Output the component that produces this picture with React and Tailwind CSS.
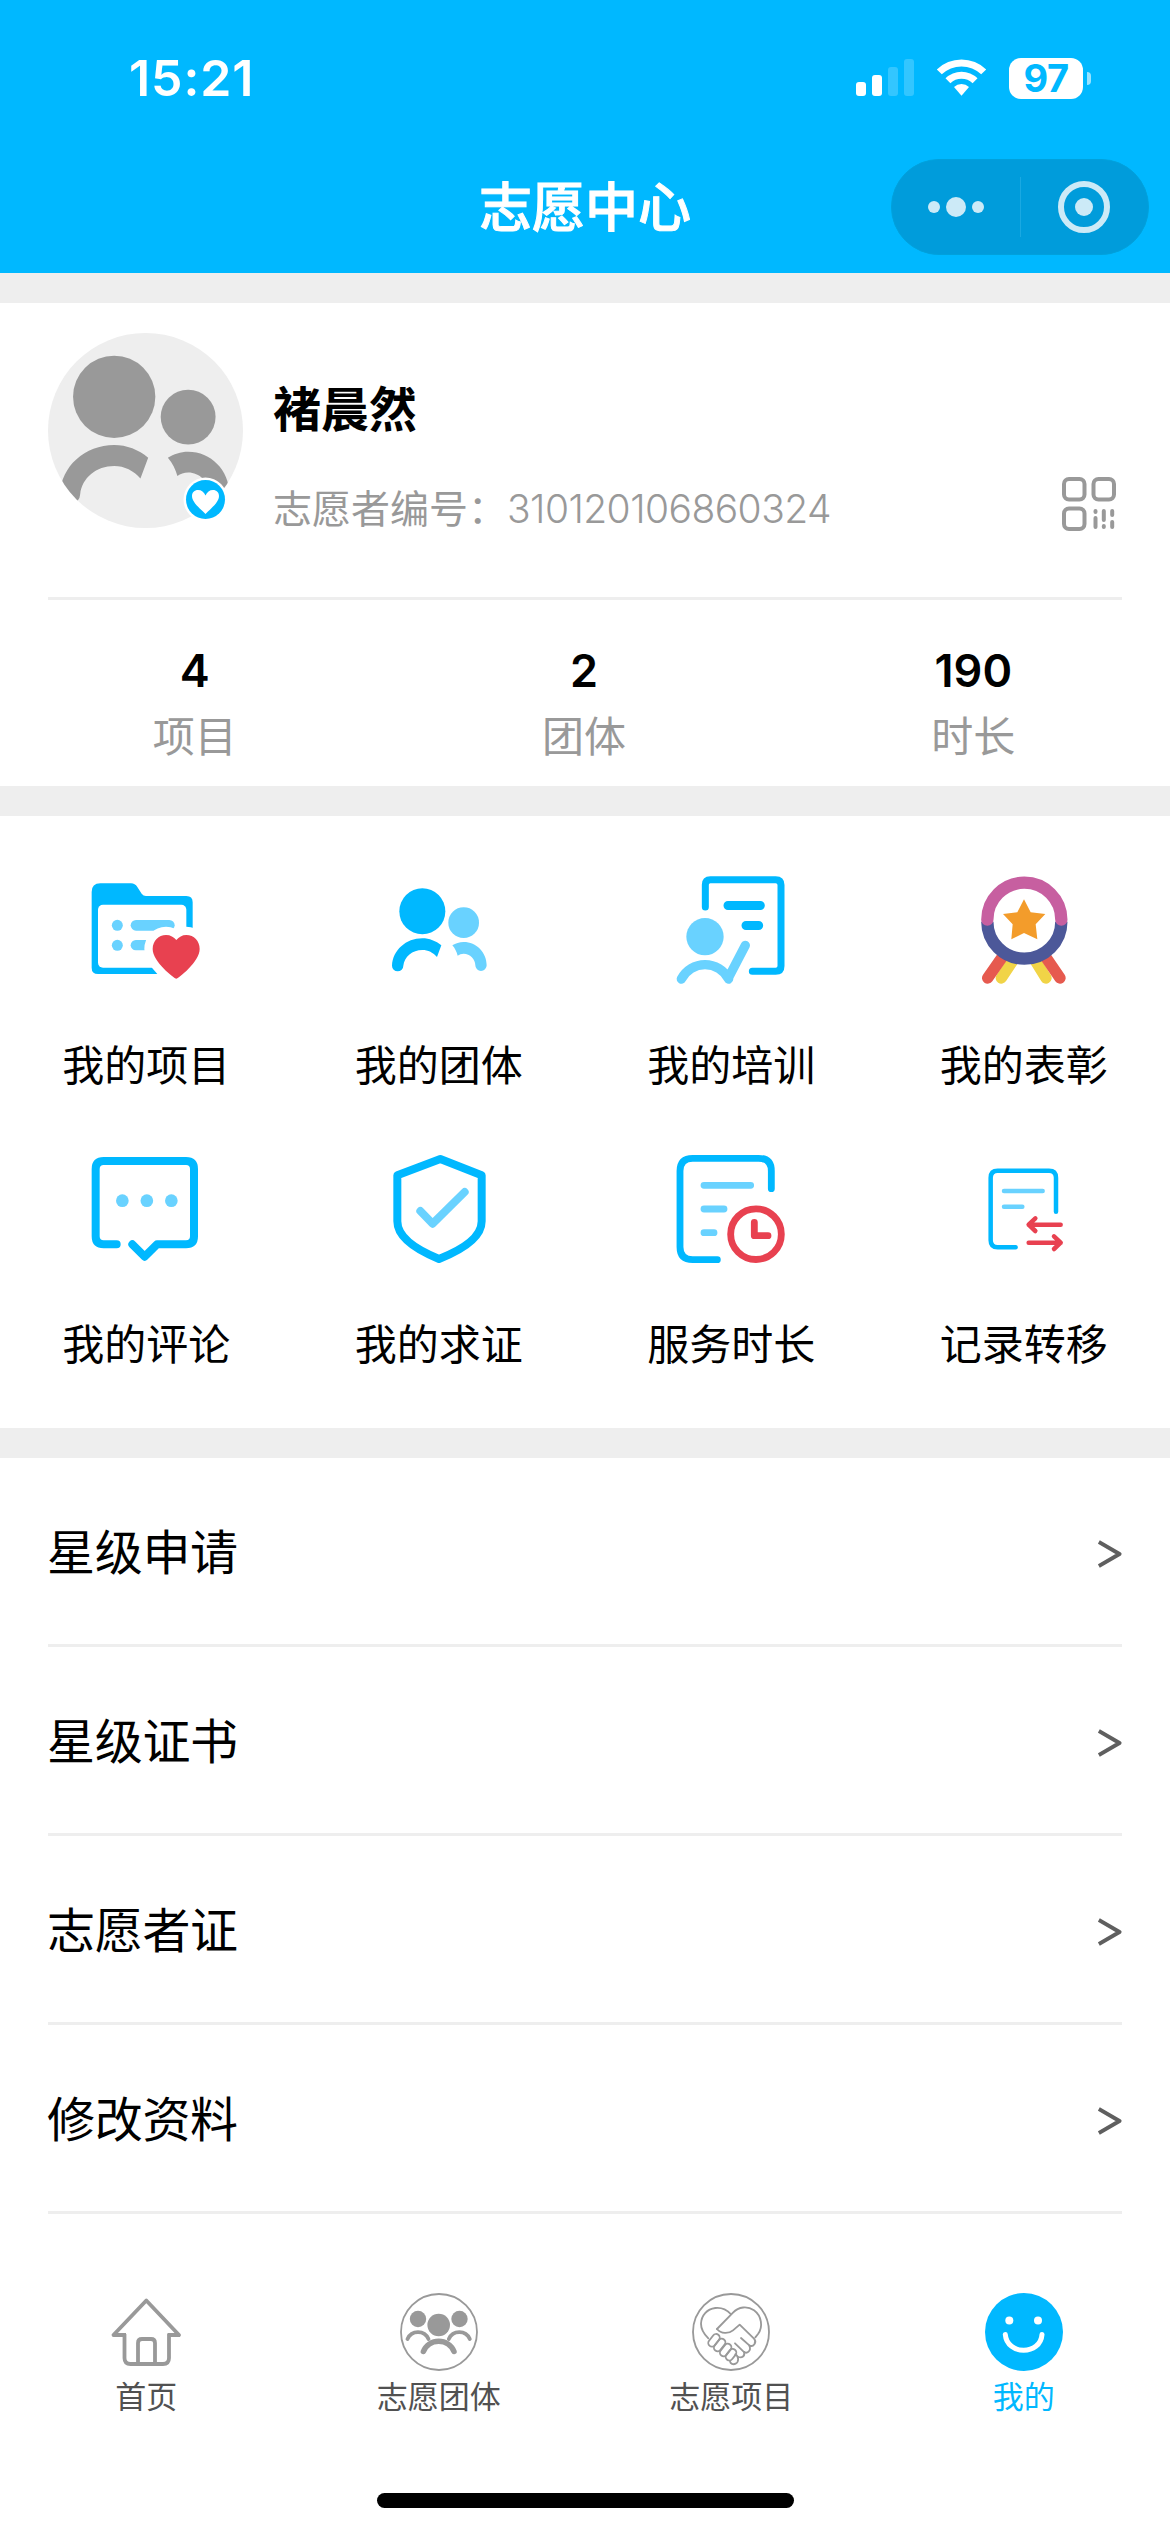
import React from 'react';

const BLUE = '#00b8ff';
const LIGHT = '#69d2ff';
const RED = '#e84150';
const GRAY = '#999999';

function GroupShape({ main, sub }) {
  return (
    <>
      <circle cx="1146" cy="184" r="69" fill={main} />
      <path d="M1055 347 C1057 301 1097 265 1146 265 C1167 265 1187 273 1203 286 L1190 321 C1179 308 1163 300 1146 300 C1116 300 1092 320 1089 347 A17 17 0 0 1 1055 347 Z" fill={main} />
      <circle cx="1270" cy="218" r="46" fill={sub} />
      <path d="M1339 346 C1339 307 1308 276 1270 276 C1257 276 1246 280 1236 286 C1244 295 1249 306 1252 317 C1257 313 1263 311 1270 311 C1289 311 1305 327 1305 346 A17 17 0 0 0 1339 346 Z" fill={sub} />
    </>
  );
}

function StatusBar() {
  return (
    <div className="flex h-[156px] items-center justify-between pl-[129px] pr-[79px]">
      <span className="text-[50px] font-semibold leading-none tracking-[0.9px]">15:21</span>
      <div className="flex items-center">
        <svg className="h-[38px] w-[58px]" viewBox="0 0 58 38" fill="#fff">
          <rect x="0" y="23" width="10" height="14" rx="3" />
          <rect x="16" y="16" width="10" height="21" rx="3" />
          <rect x="32" y="8" width="10" height="29" rx="3" opacity="0.2" />
          <rect x="48" y="0" width="10" height="37" rx="3" opacity="0.2" />
        </svg>
        <svg className="ml-[22px] h-[38px] w-[51px]" viewBox="0 0 51 38" fill="#fff">
          <path d="M0.800 10.400 A35.500 35.500 0 0 1 50.200 10.400 L45.200 15.300 A28.500 28.500 0 0 0 5.800 15.300 Z" />
          <path d="M9.500 19.300 A23 23 0 0 1 41.500 19.300 L36.600 24.200 A16 16 0 0 0 14.400 24.200 Z" />
          <path d="M18 28 A11 11 0 0 1 33 28 L25.500 36.800 Z" strokeLinejoin="round" />
        </svg>
        <div className="ml-[22px] flex h-[41px] w-[74px] items-center justify-center rounded-[12px] bg-white text-[38px] font-bold leading-none tracking-[-0.5px] text-[#00b8ff]">
          97
        </div>
        <div className="ml-[4px] h-[13px] w-[4px] rounded-r-full bg-white/60" />
      </div>
    </div>
  );
}

function Header() {
  return (
    <header className="h-[273px] bg-[#00b8ff] text-white">
      <StatusBar />
      <div className="grid h-[102px] grid-cols-[1fr_auto_1fr] items-center pr-[21px]">
        <span />
        <h1 className="ml-[21px] pt-[2px] text-[53px] font-medium leading-none [-webkit-text-stroke:1px_#fff]">志愿中心</h1>
        <div className="flex h-[96px] w-[258px] items-center justify-self-end rounded-full border border-[#00a1dc] bg-[#009cdb]">
          <div className="flex flex-1 items-center justify-center gap-[6px]">
            <span className="h-3 w-3 rounded-full bg-[#cceaf7]" />
            <span className="h-5 w-5 rounded-full bg-[#cceaf7]" />
            <span className="h-3 w-3 rounded-full bg-[#cceaf7]" />
          </div>
          <div className="h-[60px] w-px bg-[#1aa9e2]" />
          <div className="flex flex-1 items-center justify-center">
            <div className="flex h-[52px] w-[52px] items-center justify-center rounded-full border-6 border-[#cceaf7]">
              <span className="h-[18px] w-[18px] rounded-full bg-[#cceaf7]" />
            </div>
          </div>
        </div>
      </div>
    </header>
  );
}

function Avatar() {
  return (
    <div className="relative h-[195px] w-[195px]">
      <svg className="h-full w-full rounded-full bg-[#eeeeee]" viewBox="1035 77 327 327">
        <GroupShape main={GRAY} sub={GRAY} />
      </svg>
      <svg className="absolute bottom-[6px] right-[15px] h-[45px] w-[45px]" viewBox="0 0 45 45">
        <circle cx="22.5" cy="22.5" r="22" fill="#fff" />
        <circle cx="22.5" cy="22.5" r="19.5" fill={BLUE} />
        <path d="M22.500 37 C19 33 9 26 9 19 C9 15.500 11.500 13 15 13 C18.500 13 21 15 22.500 18.500 C24 15 26.500 13 30 13 C33.500 13 36 15.500 36 19 C36 26 26 33 22.500 37 Z" fill="#fff" />
      </svg>
    </div>
  );
}

function QrIcon() {
  return (
    <svg className="h-[54px] w-[54px]" viewBox="0 0 54 54" fill="none" stroke={GRAY} strokeWidth="4" strokeLinecap="round">
      <rect x="2" y="2" width="20.5" height="20.5" rx="5" />
      <rect x="31.5" y="2" width="20.5" height="20.5" rx="5" />
      <rect x="2" y="31.5" width="20.5" height="20.5" rx="5" />
      <path d="M33.500 34 v1 M33.500 41 v9 M41.800 34 v9 M41.800 49 v1 M50.200 34 v4 M50.200 45 v5" />
    </svg>
  );
}

const stats = [
  { value: '4', label: '项目' },
  { value: '2', label: '团体' },
  { value: '190', label: '时长' },
];

function Profile() {
  return (
    <section className="h-[483px] bg-white">
      <div className="mx-12 flex h-[297px] border-b-3 border-[#eeeeee] pt-[30px]">
        <Avatar />
        <div className="ml-[30px] flex-1 pt-[47px]">
          <div className="text-[48px] font-bold leading-[60px]">褚晨然</div>
          <div className="mt-[39px] flex items-center text-[39px] leading-[60px] text-[#999999]">
            <span>志愿者编号：</span>
            <span className="font-light tracking-[-0.55px]">310120106860324</span>
          </div>
        </div>
        <div className="mr-[6px] pt-[144px]">
          <QrIcon />
        </div>
      </div>
      <div className="grid grid-cols-3 pr-[2px] pt-[41px] text-center">
        {stats.map((s) => (
          <div key={s.label}>
            <div className="text-[45px] font-semibold leading-[60px]">{s.value}</div>
            <div className="mt-[6px] text-[42px] leading-[60px] text-[#999999]">{s.label}</div>
          </div>
        ))}
      </div>
    </section>
  );
}

// 每个图标画在 360x360 的画板上，显示为 120px
const menus = [
  {
    label: '我的项目',
    viewBox: '139 60 360 360',
    icon: (
      <>
        <path d="M156 126 Q156 100 182 100 H274 Q286 100 293 111 L306 131 Q311 138 319 138 H440 Q459 138 459 157 V353 Q459 372 440 372 H175 Q156 372 156 353 Z" fill={BLUE} />
        <rect x="175" y="164" width="265" height="189" rx="15" fill="#fff" />
        <g fill={LIGHT}>
          <circle cx="233" cy="226" r="16.500" />
          <circle cx="233" cy="286" r="16.500" />
          <rect x="273" y="210" width="132" height="32" rx="16" />
          <rect x="273" y="270" width="110" height="31" rx="15.500" />
        </g>
        <path
          d="M410 386 C404 386 339 335 339 297 C339 273 357 255 379 255 C393 255 402 261 410 270 C418 261 427 255 440 255 C463 255 480 273 480 297 C480 335 416 386 410 386 Z"
          fill={RED}
          stroke="#fff"
          strokeWidth="50"
          strokeLinejoin="round"
          paintOrder="stroke"
        />
      </>
    ),
  },
  {
    label: '我的团体',
    viewBox: '1016 60 360 360',
    icon: <GroupShape main={BLUE} sub={LIGHT} />,
  },
  {
    label: '我的培训',
    viewBox: '94 60 360 360',
    icon: (
      <g fill="none" strokeLinecap="round" strokeLinejoin="round">
        <path d="M197 171 V104 Q197 89 212 89 H408 Q424 89 424 105 V348 Q424 364 408 364 H338" stroke={BLUE} strokeWidth="21" />
        <path d="M265 166.500 H362 M319 226.500 H357" stroke={BLUE} strokeWidth="27" />
        <circle cx="196" cy="260" r="56" fill={LIGHT} />
        <path d="M125 387 A80 80 0 0 1 267 387 V382 L317 286" stroke={LIGHT} strokeWidth="28" />
      </g>
    ),
  },
  {
    label: '我的表彰',
    viewBox: '971 60 360 360',
    icon: (
      <g fill="none" strokeLinecap="round">
        <path d="M1083 384 L1118 331 M1217 384 L1184 331" stroke="#f1d447" strokeWidth="34" />
        <path d="M1042 384 L1088 318 M1259 384 L1214 318" stroke="#e65a4f" strokeWidth="34" />
        <path d="M1041 215 a111 111 0 0 0 222 0" stroke="#4c5899" strokeWidth="37" strokeLinecap="butt" />
        <path d="M1041 209 a111 111 0 0 1 222 0" stroke="#c75fa0" strokeWidth="37" />
        <path d="M1151 148 L1171 187 L1215 192 L1186 223 L1191 268 L1151 249 L1113 268 L1117 223 L1088 192 L1131 187 Z" fill="#f39c2b" />
      </g>
    ),
  },
  {
    label: '我的评论',
    viewBox: '139 87 360 360',
    icon: (
      <g fill="none" strokeLinecap="round" strokeLinejoin="round">
        <path d="M231 373 H192 Q168 373 168 349 V147 Q168 123 192 123 H439 Q463 123 463 147 V349 Q463 373 439 373 H352 L315 410 L278 373" stroke={BLUE} strokeWidth="24" />
        <g fill={LIGHT}>
          <circle cx="248" cy="242" r="19" />
          <circle cx="321.500" cy="242" r="19" />
          <circle cx="395" cy="242" r="19" />
        </g>
      </g>
    ),
  },
  {
    label: '我的求证',
    viewBox: '1016 87 360 360',
    icon: (
      <g fill="none" strokeLinecap="round" strokeLinejoin="round" strokeWidth="24">
        <path d="M1200 117 L1324 166 V304 C1324 354 1262 391 1196 417 C1132 391 1071 354 1071 304 V166 Z" stroke={BLUE} />
        <path d="M1140 273 L1177 311 L1273 216" stroke={LIGHT} />
      </g>
    ),
  },
  {
    label: '服务时长',
    viewBox: '94 87 360 360',
    icon: (
      <g fill="none" strokeLinecap="round" strokeLinejoin="round" strokeWidth="20.500">
        <path d="M395 206 V153 Q395 115 357 115 H159 Q121 115 121 153 V381 Q121 419 159 419 H233" stroke={BLUE} />
        <path d="M193 196 H333 M193 267 H253 M193 338 H223" stroke={LIGHT} />
        <circle cx="349" cy="342.500" r="76" stroke={RED} />
        <path d="M344 307 V347 H385" stroke={RED} />
      </g>
    ),
  },
  {
    label: '记录转移',
    viewBox: '971 87 360 360',
    icon: (
      <g fill="none" strokeLinecap="round" strokeLinejoin="round" strokeWidth="13.500">
        <path d="M1247 275 V173 Q1247 152 1226 152 H1072 Q1051 152 1051 173 V361 Q1051 382 1072 382 H1126" stroke={BLUE} />
        <path d="M1091 213 H1207 M1091 260 H1146" stroke={LIGHT} />
        <path d="M1261 314 H1165 M1185 295 L1165 314 L1185 333 M1165 368 H1261 M1241 349 L1261 368 L1241 387" stroke={RED} />
      </g>
    ),
  },
];

function MenuGrid() {
  return (
    <section className="grid h-[612px] grid-cols-4 content-start gap-y-[53px] bg-white pt-[54px]">
      {menus.map((m) => (
        <div key={m.label} className="flex flex-col items-center">
          <svg className="h-[120px] w-[120px]" viewBox={m.viewBox}>
            {m.icon}
          </svg>
          <span className="mt-[46px] text-[42px] leading-[60px]">{m.label}</span>
        </div>
      ))}
    </section>
  );
}

const rows = ['星级申请', '星级证书', '志愿者证', '修改资料'];

function List() {
  return (
    <section className="bg-white px-12">
      {rows.map((r) => (
        <div key={r} className="flex h-[189px] items-center justify-between border-b-3 border-[#eeeeee]">
          <span className="-ml-px pt-[3px] text-[48px] leading-[60px] tracking-[-0.3px]">{r}</span>
          <svg className="mt-[6px] h-[28px] w-[24px]" viewBox="0 0 24 28" fill="none" stroke="#5f5f5f" strokeWidth="4">
            <path d="M0.800 2 L21.500 14 L0.800 26" strokeLinejoin="round" />
          </svg>
        </div>
      ))}
    </section>
  );
}

const tabs = [
  {
    label: '首页',
    viewBox: '0 0 78 78',
    icon: (
      <g fill="none" stroke={GRAY} strokeWidth="3.800" strokeLinejoin="round">
        <path d="M17.500 42 H6.500 L39.300 7.500 L72 42 H62 V65 Q62 71 56 71 H23.500 Q17.500 71 17.500 65 Z" stroke="none" />
        <path d="M19 42 H6.500 L39.300 7.500 L72 42 H60.500 M17.500 41 V65 Q17.500 71 23.500 71 H56 Q62 71 62 65 V41" />
        <path d="M31 71 V50 Q31 46 35 46 H44 Q48 46 48 50 V71" />
      </g>
    ),
  },
  {
    label: '志愿团体',
    viewBox: '0 0 78 78',
    icon: (
      <g fill="none" stroke={GRAY} strokeLinecap="round">
        <circle cx="39" cy="39" r="38" strokeWidth="1.800" />
        <g fill={GRAY} stroke="none">
          <circle cx="18" cy="26" r="8.200" />
          <circle cx="59.500" cy="26" r="8.200" />
          <circle cx="38.700" cy="32" r="11.300" />
        </g>
        <path d="M7.500 46 A11.500 11.500 0 0 1 28.500 46 M48.800 46 A11.500 11.500 0 0 1 69.800 46" strokeWidth="3.800" />
        <path d="M23.400 58.500 A16.500 16.500 0 0 1 54 58.500" strokeWidth="5.500" />
      </g>
    ),
  },
  {
    label: '志愿项目',
    viewBox: '37 39 234 234',
    icon: (
      <g fill="none" stroke={GRAY} strokeWidth="5.500" strokeLinecap="round" strokeLinejoin="round">
        <circle cx="154" cy="156" r="114" />
        <path d="M153 102 C140 88 124 82 107 84 C82 87 65 106 64 131 C64 149 75 164 86 175" />
        <path d="M112 147 L160 98 C177 80 203 77 223 91 C246 108 251 140 235 162 L227 172" />
        <path d="M112 147 C124 162 147 162 160 151 L180 134 L223 176 C233 187 221 203 209 196 L184 174" />
        <path d="M209 197 C216 212 202 224 191 214 L166 190" />
        <path d="M193 216 C197 228 187 235 176 231" />
        <rect x="92" y="160" width="22" height="42" rx="11" transform="rotate(38 103 181)" />
        <rect x="109" y="174" width="22" height="42" rx="11" transform="rotate(38 120 195)" />
        <rect x="127" y="189" width="22" height="42" rx="11" transform="rotate(38 138 210)" />
        <rect x="143" y="205" width="22" height="38" rx="11" transform="rotate(38 154 224)" />
        <path d="M167 223 C178 229 178 246 168 251 C160 255 152 251 151 244" />
      </g>
    ),
  },
  {
    label: '我的',
    active: true,
    viewBox: '0 0 78 78',
    icon: (
      <>
        <circle cx="39" cy="39" r="39" fill={BLUE} />
        <circle cx="24.300" cy="27.500" r="4" fill="#fff" />
        <circle cx="53" cy="27.500" r="4" fill="#fff" />
        <path d="M20.300 41.500 C22 62.500 55.500 62.500 57 41.500" fill="none" stroke="#fff" strokeWidth="5" strokeLinecap="round" />
      </>
    ),
  },
];

function TabBar() {
  return (
    <nav className="flex flex-1 flex-col items-center justify-between bg-white pb-6 pt-[79px]">
      <div className="grid w-full grid-cols-4">
        {tabs.map((t) => (
          <div key={t.label} className="flex flex-col items-center">
            <svg className="h-[78px] w-[78px]" viewBox={t.viewBox}>
              {t.icon}
            </svg>
            <span className={`mt-[6px] text-[31px] leading-[40px] ${t.active ? 'text-[#00b8ff]' : 'text-[#515151]'}`}>
              {t.label}
            </span>
          </div>
        ))}
      </div>
      <div className="h-[15px] w-[417px] rounded-full bg-black" />
    </nav>
  );
}

export default function App() {
  return (
    <div className="flex h-[2532px] w-[1170px] flex-col overflow-hidden bg-[#eeeeee] font-['Inter','Noto_Sans_CJK_SC',sans-serif] text-black">
      <Header />
      <div className="flex flex-1 flex-col gap-[30px] pt-[30px]">
        <Profile />
        <MenuGrid />
        <div className="flex flex-1 flex-col">
          <List />
          <TabBar />
        </div>
      </div>
    </div>
  );
}
